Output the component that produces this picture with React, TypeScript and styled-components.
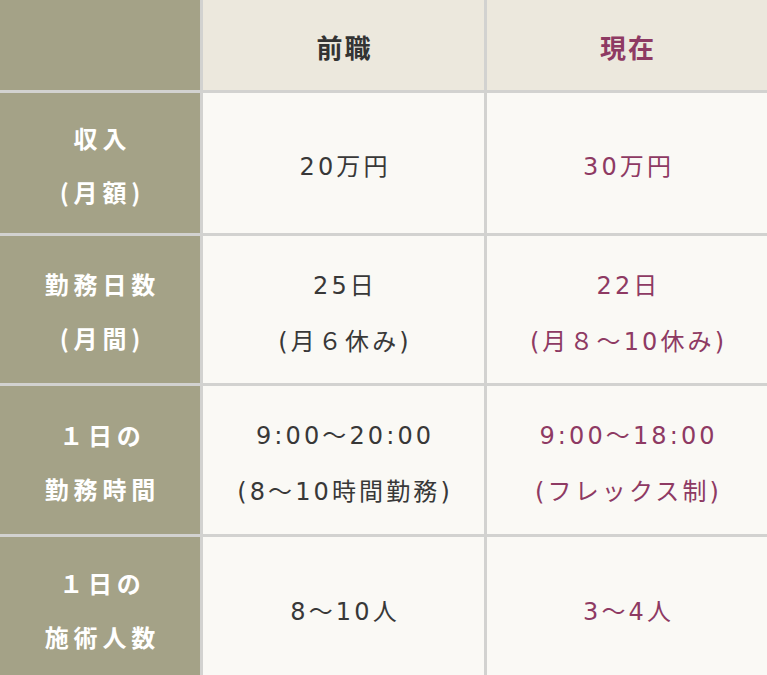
import styled, { createGlobalStyle } from 'styled-components';

const GlobalStyle = createGlobalStyle`
  html, body {
    margin: 0;
    padding: 0;
    background: #ffffff;
  }
  body {
    font-family: "Noto Sans CJK JP", "Noto Sans", sans-serif;
  }
`;

type Row = {
  label: string[];
  before: string[];
  after: string[];
};

const rows: Row[] = [
  { label: ['収入', '(月額)'], before: ['20万円'], after: ['30万円'] },
  { label: ['勤務日数', '(月間)'], before: ['25日', '(月６休み)'], after: ['22日', '(月８〜10休み)'] },
  { label: ['１日の', '勤務時間'], before: ['9:00〜20:00', '(8〜10時間勤務)'], after: ['9:00〜18:00', '(フレックス制)'] },
  { label: ['１日の', '施術人数'], before: ['8〜10人'], after: ['3〜4人'] },
];

const App = () => {
  return (
    <>
      <GlobalStyle />
      <Table>
        <Corner />
        <HeadCell>前職</HeadCell>
        <HeadCell accent>現在</HeadCell>
        {rows.map((row, i) => (
          <RowGroup key={i}>
            <LabelCell>
              {row.label.map((t, j) => (
                <Line key={j}>{t}</Line>
              ))}
            </LabelCell>
            <BodyCell>
              {row.before.map((t, j) => (
                <Line key={j}>{t}</Line>
              ))}
            </BodyCell>
            <BodyCell accent>
              {row.after.map((t, j) => (
                <Line key={j}>{t}</Line>
              ))}
            </BodyCell>
          </RowGroup>
        ))}
      </Table>
    </>
  );
};

const Table = styled.div`
  display: grid;
  grid-template-columns: 200px 281px 1fr;
  grid-template-rows: 90px 140px 147px 148px 142px;
  gap: 3px;
  background-color: #d2d2d0;
  width: 767px;
  height: 675px;
  overflow: hidden;
`;

const RowGroup = styled.div`
  display: contents;
`;

const Corner = styled.div`
  background-color: #a4a287;
`;

interface AccentProps {
  accent?: boolean;
}

const HeadCell = styled.div<AccentProps>`
  display: flex;
  align-items: center;
  justify-content: center;
  background-color: #ece8dd;
  font-size: 26px;
  font-weight: 700;
  letter-spacing: 0.08em;
  color: ${props => (props.accent ? '#8e3a63' : '#333333')};
  padding-top: 2px;
  padding-left: 0.08em;
`;

const LabelCell = styled.div`
  display: flex;
  flex-direction: column;
  align-items: center;
  justify-content: center;
  background-color: #a4a287;
  color: #ffffff;
  font-size: 24px;
  font-weight: 700;
  line-height: 54px;
  letter-spacing: 0.2em;
  padding-left: 0.2em;
  padding-top: 3px;
`;

const BodyCell = styled.div<AccentProps>`
  display: flex;
  flex-direction: column;
  align-items: center;
  justify-content: center;
  background-color: #faf9f5;
  color: ${props => (props.accent ? '#8e3a63' : '#383838')};
  font-family: "DejaVu Sans", "Noto Sans CJK JP", sans-serif;
  font-size: 24px;
  line-height: 56px;
  letter-spacing: 0.13em;
  padding-left: 0.13em;
  padding-top: 8px;
`;

const Line = styled.span`
  display: block;
  white-space: nowrap;
`;

export default App;
